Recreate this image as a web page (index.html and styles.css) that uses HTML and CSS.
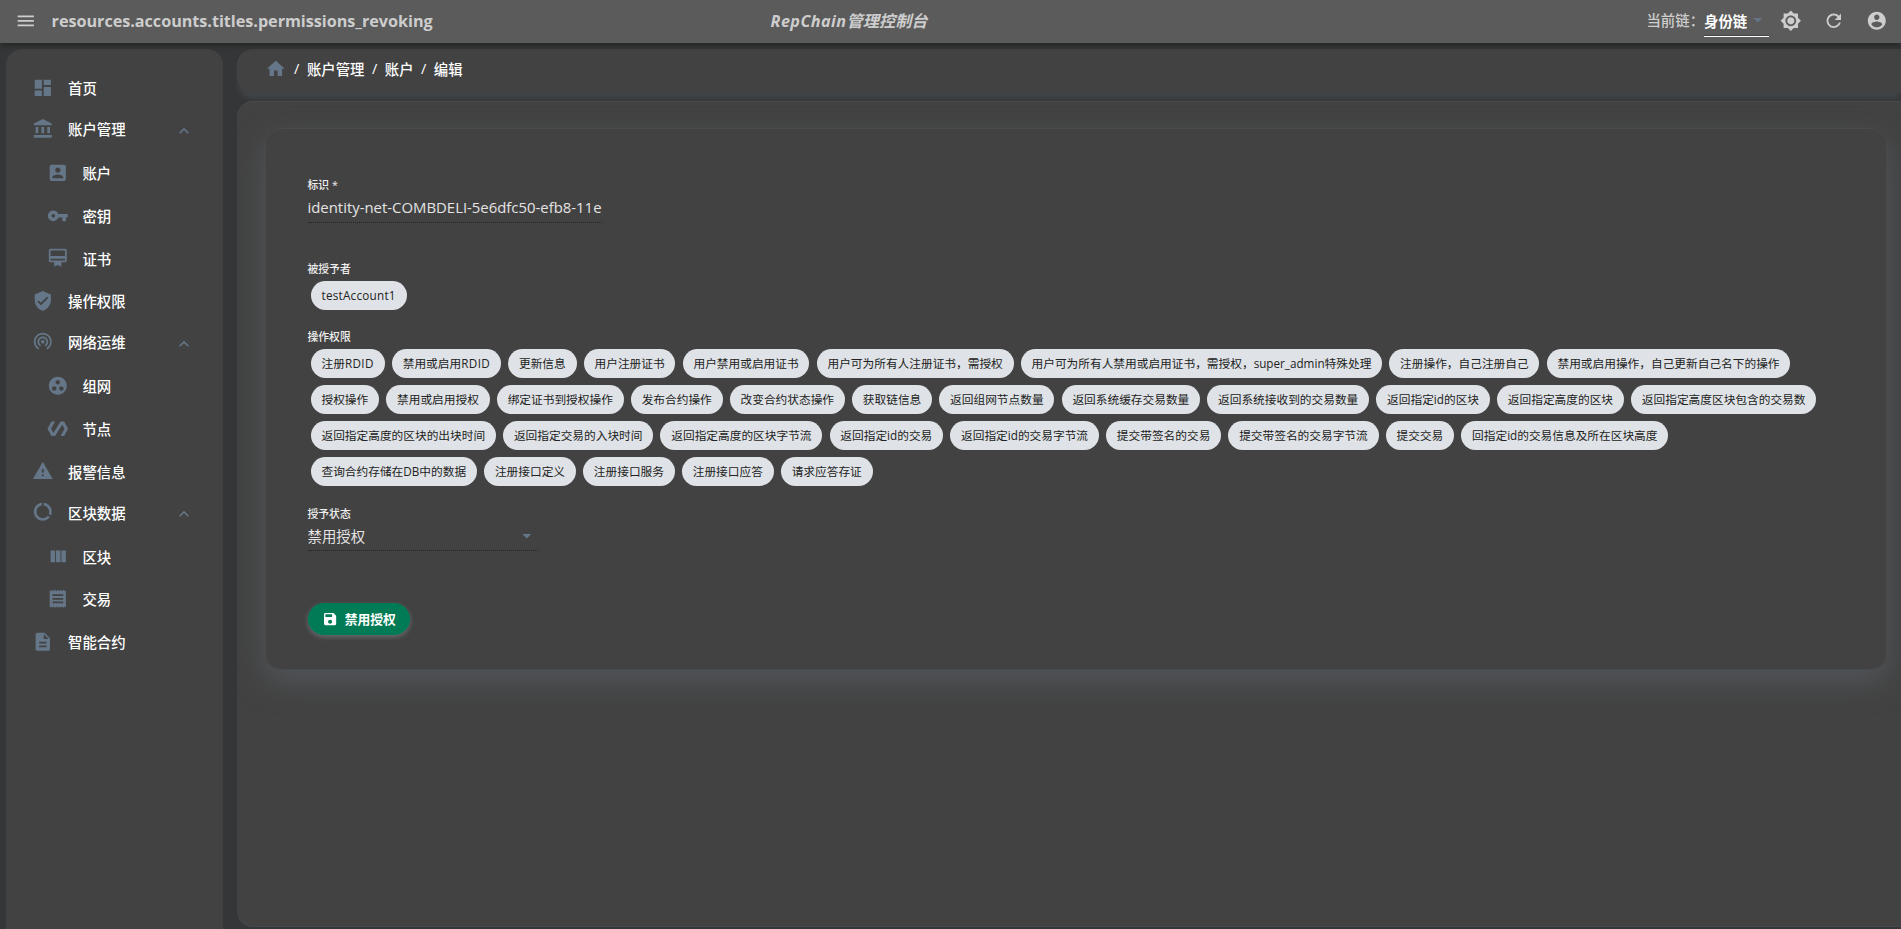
FILE: index.html
```html
<!DOCTYPE html>
<html lang="zh-CN">
<head>
<meta charset="utf-8">
<title>RepChain管理控制台</title>
<link rel="stylesheet" href="styles.css">
</head>
<body>
<header class="appbar">
  <svg class="icon menu-btn" viewBox="0 0 24 24"><path d="M3 18h18v-2H3v2zm0-5h18v-2H3v2zm0-7v2h18V6H3z"/></svg>
  <h1 class="page-title">resources.accounts.titles.permissions_revoking</h1>
  <div class="brand"><span class="brand-latin">RepChain</span>管理控制台</div>
  <div class="tools">
    <span class="chain-label">当前链：</span>
    <div class="chain-select"><span>身份链</span><svg class="icon" viewBox="0 0 24 24"><path d="M7 10l5 5 5-5z"/></svg></div>
    <svg class="icon tool" viewBox="0 0 24 24"><path d="M20 8.69V4h-4.69L12 .69 8.69 4H4v4.69L.69 12 4 15.31V20h4.69L12 23.31 15.31 20H20v-4.69L23.31 12 20 8.69zM12 18c-3.31 0-6-2.69-6-6s2.69-6 6-6 6 2.69 6 6-2.69 6-6 6zm0-10c-2.21 0-4 1.79-4 4s1.79 4 4 4 4-1.79 4-4-1.79-4-4-4z"/></svg>
    <svg class="icon tool" viewBox="0 0 24 24"><path d="M17.65 6.35C16.2 4.9 14.21 4 12 4c-4.42 0-7.99 3.58-7.99 8s3.57 8 7.99 8c3.73 0 6.84-2.55 7.73-6h-2.08c-.82 2.33-3.04 4-5.65 4-3.31 0-6-2.69-6-6s2.69-6 6-6c1.66 0 3.14.69 4.22 1.78L13 11h7V4l-2.35 2.35z"/></svg>
    <svg class="icon tool" viewBox="0 0 24 24"><path d="M12 2C6.48 2 2 6.48 2 12s4.48 10 10 10 10-4.48 10-10S17.52 2 12 2zm0 3c1.66 0 3 1.34 3 3s-1.34 3-3 3-3-1.34-3-3 1.34-3 3-3zm0 14.2c-2.5 0-4.71-1.28-6-3.22.03-1.99 4-3.08 6-3.08 1.99 0 5.97 1.09 6 3.08-1.29 1.94-3.5 3.22-6 3.22z"/></svg>
  </div>
</header>
<div class="body">
  <nav class="sidebar">
    <a class="item"><svg class="icon" viewBox="0 0 24 24"><path d="M3 13h8V3H3v10zm0 8h8v-6H3v6zm10 0h8V11h-8v10zm0-18v6h8V3h-8z"/></svg>首页</a>
    <a class="item head"><svg class="icon" viewBox="0 0 24 24"><path d="M4 10h3v7H4zM10.5 10h3v7h-3zM2 19h20v3H2zM17 10h3v7h-3zM12 1L2 6v2h20V6z"/></svg>账户管理<svg class="chev" viewBox="0 0 24 24"><path d="M12 8l-6 6 1.41 1.41L12 10.83l4.59 4.58L18 14z"/></svg></a>
    <a class="item sub"><svg class="icon" viewBox="0 0 24 24"><path d="M3 5v14c0 1.1.89 2 2 2h14c1.1 0 2-.9 2-2V5c0-1.1-.9-2-2-2H5c-1.11 0-2 .9-2 2zm12 4c0 1.66-1.34 3-3 3s-3-1.34-3-3 1.34-3 3-3 3 1.34 3 3zm-9 8c0-2 4-3.1 6-3.1s6 1.1 6 3.1v1H6v-1z"/></svg>账户</a>
    <a class="item sub"><svg class="icon" viewBox="0 0 24 24"><path d="M12.65 10C11.83 7.67 9.61 6 7 6c-3.31 0-6 2.69-6 6s2.69 6 6 6c2.61 0 4.83-1.67 5.65-4H17v4h4v-4h2v-4H12.65zM7 14c-1.1 0-2-.9-2-2s.9-2 2-2 2 .9 2 2-.9 2-2 2z"/></svg>密钥</a>
    <a class="item sub"><svg class="icon" viewBox="0 0 24 24"><path d="M20 2H4c-1.11 0-2 .89-2 2v11c0 1.11.89 2 2 2h4v5l4-2 4 2v-5h4c1.11 0 2-.89 2-2V4c0-1.11-.89-2-2-2zm0 13H4v-2h16v2zm0-5H4V4h16v6z"/></svg>证书</a>
    <a class="item"><svg class="icon" viewBox="0 0 24 24"><path d="M12 1L3 5v6c0 5.55 3.84 10.74 9 12 5.16-1.26 9-6.45 9-12V5l-9-4zm-2 16l-4-4 1.41-1.41L10 14.17l6.59-6.59L18 9l-8 8z"/></svg>操作权限</a>
    <a class="item head"><svg class="icon" viewBox="0 0 24 24"><path d="M12 10c-1.1 0-2 .9-2 2s.9 2 2 2 2-.9 2-2-.9-2-2-2zm6 2c0-3.31-2.69-6-6-6s-6 2.69-6 6c0 2.22 1.21 4.15 3 5.19l1-1.74c-1.19-.7-2-1.97-2-3.45 0-2.21 1.79-4 4-4s4 1.79 4 4c0 1.48-.81 2.75-2 3.45l1 1.74c1.79-1.04 3-2.97 3-5.19zM12 2C6.48 2 2 6.48 2 12c0 3.7 2.01 6.92 4.99 8.65l1-1.73C5.61 17.53 4 14.96 4 12c0-4.42 3.58-8 8-8s8 3.58 8 8c0 2.96-1.61 5.53-4 6.92l1 1.73c2.99-1.73 5-4.95 5-8.65 0-5.52-4.48-10-10-10z"/></svg>网络运维<svg class="chev" viewBox="0 0 24 24"><path d="M12 8l-6 6 1.41 1.41L12 10.83l4.59 4.58L18 14z"/></svg></a>
    <a class="item sub"><svg class="icon" viewBox="0 0 24 24"><path d="M12 2C6.48 2 2 6.48 2 12s4.48 10 10 10 10-4.48 10-10S17.52 2 12 2zM8 17.5c-1.38 0-2.5-1.12-2.5-2.5s1.12-2.5 2.5-2.5 2.5 1.12 2.5 2.5-1.12 2.5-2.5 2.5zM9.5 8c0-1.38 1.12-2.5 2.5-2.5s2.5 1.12 2.5 2.5-1.12 2.5-2.5 2.5S9.5 9.38 9.5 8zm6.5 9.5c-1.38 0-2.5-1.12-2.5-2.5s1.12-2.5 2.5-2.5 2.5 1.12 2.5 2.5-1.12 2.5-2.5 2.5z"/></svg>组网</a>
    <a class="item sub"><svg class="icon" viewBox="0 0 24 24"><path d="M19 4h-4L7.110 16.630 4.500 12 9 4H5L.5 12 5 20h4l7.890-12.630L19.500 12 15 20h4l4.500-8z"/></svg>节点</a>
    <a class="item"><svg class="icon" viewBox="0 0 24 24"><path d="M1 21h22L12 2 1 21zm12-3h-2v-2h2v2zm0-4h-2v-4h2v4z"/></svg>报警信息</a>
    <a class="item head"><svg class="icon" viewBox="0 0 24 24"><path d="M13 2.050v3.030c3.390.49 6 3.390 6 6.920 0 .9-.18 1.750-.48 2.540l2.600 1.530c.56-1.240.88-2.620.88-4.070 0-5.180-3.950-9.450-9-9.950zM12 19c-3.870 0-7-3.130-7-7 0-3.530 2.610-6.430 6-6.920V2.050c-5.060.5-9 4.760-9 9.950 0 5.520 4.470 10 9.990 10 3.310 0 6.240-1.610 8.060-4.090l-2.600-1.530C16.170 17.980 14.210 19 12 19z"/></svg>区块数据<svg class="chev" viewBox="0 0 24 24"><path d="M12 8l-6 6 1.410 1.410L12 10.830l4.590 4.580L18 14z"/></svg></a>
    <a class="item sub"><svg class="icon" viewBox="0 0 24 24"><path d="M10 18h5V5h-5v13zm-6 0h5V5H4v13zM16 5v13h5V5h-5z"/></svg>区块</a>
    <a class="item sub"><svg class="icon" viewBox="0 0 24 24"><path d="M18 17H6v-2h12v2zm0-4H6v-2h12v2zm0-4H6V7h12v2zM3 22l1.500-1.500L6 22l1.500-1.500L9 22l1.500-1.500L12 22l1.500-1.500L15 22l1.500-1.500L18 22l1.500-1.500L21 22V2l-1.500 1.500L18 2l-1.500 1.500L15 2l-1.500 1.500L12 2l-1.500 1.500L9 2 7.500 3.500 6 2 4.500 3.500 3 2v20z"/></svg>交易</a>
    <a class="item"><svg class="icon" viewBox="0 0 24 24"><path d="M14 2H6c-1.100 0-1.990.9-1.990 2L4 20c0 1.100.89 2 1.990 2H18c1.100 0 2-.9 2-2V8l-6-6zm2 16H8v-2h8v2zm0-4H8v-2h8v2zm-3-5V3.500L18.500 9H13z"/></svg>智能合约</a>
  </nav>
  <main class="main">
    <div class="crumbs"><svg class="icon" viewBox="0 0 24 24"><path d="M10 20v-6h4v6h5v-8h3L12 3 2 12h3v8z"/></svg><i>/</i><span>账户管理</span><i>/</i><span>账户</span><i>/</i><span>编辑</span></div>
    <section class="content">
      <div class="card">
        <label class="field-label id-label">标识 *</label>
        <div class="input id-input">identity-net-COMBDELI-5e6dfc50-efb8-11e</div>
        <div class="field-label grantee-label">被授予者</div>
        <div class="chips"><span class="chip"><b class="account">testAccount1</b></span></div>
        <div class="field-label ops-label">操作权限</div>
        <div class="chips">
          <span class="chip">注册<b class="caps">RDID</b></span><span class="chip">禁用或启用<b class="caps">RDID</b></span><span class="chip">更新信息</span><span class="chip">用户注册证书</span><span class="chip">用户禁用或启用证书</span><span class="chip">用户可为所有人注册证书，需授权</span><span class="chip">用户可为所有人禁用或启用证书，需授权，<b>super_admin</b>特殊处理</span><span class="chip">注册操作，自己注册自己</span><span class="chip">禁用或启用操作，自己更新自己名下的操作</span>
          <span class="chip">授权操作</span><span class="chip">禁用或启用授权</span><span class="chip">绑定证书到授权操作</span><span class="chip">发布合约操作</span><span class="chip">改变合约状态操作</span><span class="chip">获取链信息</span><span class="chip">返回组网节点数量</span><span class="chip">返回系统缓存交易数量</span><span class="chip">返回系统接收到的交易数量</span><span class="chip">返回指定<b>id</b>的区块</span><span class="chip">返回指定高度的区块</span><span class="chip">返回指定高度区块包含的交易数</span>
          <span class="chip">返回指定高度的区块的出块时间</span><span class="chip">返回指定交易的入块时间</span><span class="chip">返回指定高度的区块字节流</span><span class="chip">返回指定<b>id</b>的交易</span><span class="chip">返回指定<b>id</b>的交易字节流</span><span class="chip">提交带签名的交易</span><span class="chip">提交带签名的交易字节流</span><span class="chip">提交交易</span><span class="chip">回指定<b>id</b>的交易信息及所在区块高度</span>
          <span class="chip">查询合约存储在<b>DB</b>中的数据</span><span class="chip">注册接口定义</span><span class="chip">注册接口服务</span><span class="chip">注册接口应答</span><span class="chip">请求应答存证</span>
        </div>
        <label class="field-label state-label">授予状态</label>
        <div class="input state-input"><span>禁用授权</span><svg class="icon" viewBox="0 0 24 24"><path d="M7 10l5 5 5-5z"/></svg></div>
        <button class="save"><svg viewBox="0 0 24 24"><path d="M17 3H5c-1.110 0-2 .9-2 2v14c0 1.100.89 2 2 2h14c1.100 0 2-.9 2-2V7l-4-4zm-5 16c-1.660 0-3-1.340-3-3s1.340-3 3-3 3 1.340 3 3-1.340 3-3 3zm3-10H5V5h10v4z"/></svg><span>禁用授权</span></button>
      </div>
    </section>
  </main>
</div>
</body>
</html>
```
FILE: styles.css
```css
* { box-sizing: border-box; }

body {
  margin: 0;
  height: 929px;
  overflow: hidden;
  display: flex;
  flex-direction: column;
  background: #353637;
  color: #fff;
  font-family: "Open Sans", "Noto Sans CJK SC", sans-serif;
  font-size: 14.4px;
}

.icon { width: 21.6px; height: 21.6px; fill: #647687; flex: none; display: block; }

/* top bar */
.appbar {
  flex: none;
  height: 43px;
  display: flex;
  align-items: center;
  background: #5b5b5b;
  color: #cdcdcd;
  position: relative;
  padding: 0 13px 2px 15px;
  box-shadow: 0 2px 4px -1px rgba(0,0,0,.2), 0 4px 5px rgba(0,0,0,.14);
}
.appbar .icon { fill: #cdcdcd; }
.page-title { margin: 0 0 0 15px; font-size: 16.2px; font-weight: 700; letter-spacing: -.03px; width: 719px; white-space: nowrap; }
.brand { font-size: 16.2px; font-weight: 700; font-style: italic; white-space: nowrap; margin-top: -1px; }
.brand-latin { letter-spacing: .45px; }
.tools { margin-left: auto; display: flex; align-items: center; }
.chain-label { font-size: 14.4px; font-weight: 500; margin-top: -3px; }
.chain-select {
  display: flex;
  align-items: center;
  width: 65px;
  height: 31px;
  padding-bottom: 2px;
  margin-top: 2px;
  border-bottom: 1px solid #fff;
  box-shadow: inset 0 -1px #444;
  font-weight: 700;
  color: #fff;
}
.appbar .chain-select .icon { fill: #647687; }
.tool { margin-left: 21.6px; }
.chain-select + .tool { margin-left: 11px; }

/* shell */
.body { flex: 1; display: flex; gap: 14px; padding: 6px 0 0 6px; min-height: 0; }
.sidebar {
  width: 217px;
  flex: none;
  padding: 17.5px 0 0 26px;
  border-radius: 16px 16px 0 0;
  background: #424242;
}
.item {
  height: 42.6px;
  display: flex;
  align-items: center;
  font-weight: 500;
  padding-right: 29px;
}
.item .icon { margin-right: 14.4px; }
.sub { padding-left: 14.8px; }
.sub .icon { margin-right: 14px; }
.head { padding-bottom: 3px; }
.chev { width: 20px; height: 20px; fill: #647687; margin-left: auto; margin-top: 4px; }

.main { flex: 1; min-width: 0; display: flex; flex-direction: column; gap: 8px; padding-bottom: 2px; }
.crumbs {
  height: 44px;
  flex: none;
  display: flex;
  align-items: center;
  padding: 0 0 6px 28px;
  border-radius: 16px 0 0 16px;
  background: #424242;
  box-shadow: 0 7px 6px -2px #42474b;
  font-weight: 500;
}
.crumbs .icon { margin-top: 2px; }
.crumbs i { font-style: normal; width: 5.5px; margin: 0 7.4px; text-align: center; }
.content {
  flex: 1;
  padding: 27px 14px 0 28px;
  border-radius: 16px 0 0 16px;
  background: #424242;
  box-shadow: inset 0 1px #484848, inset 0 -1px #464b50;
  overflow: hidden;
}
.card {
  height: 542px;
  padding: 46px 42px 0 41.5px;
  border: 1px solid #484a4b;
  border-radius: 16px;
  background: #424242;
  box-shadow: 0 12px 30px -1px #53575b;
}
.field-label { display: block; font-size: 10.8px; line-height: 20px; color: #eee; font-weight: 500; }
.input { border-bottom: 1px dotted #222; color: #e4e4e4; white-space: nowrap; overflow: hidden; }
.id-input { width: 294px; height: 28px; line-height: 25px; font-size: 14.9px; }
.grantee-label { margin-top: 36px; }
.ops-label { margin-top: 17.5px; }
.chips { display: flex; flex-wrap: wrap; gap: 7.2px; padding: 2px 15px 0 3.2px; }
.ops-label + .chips { padding-top: 1.5px; }
.chip {
  height: 28.8px;
  padding: 0 10.8px;
  border-radius: 14.4px;
  background: #dfe2e6;
  color: #222;
  font-size: 11.7px;
  line-height: 28.8px;
  white-space: nowrap;
}
.chip b { font-weight: 400; }
.chip .account { letter-spacing: .25px; }
.chip .caps { letter-spacing: .4px; }
.state-label { margin-top: 18px; }
.state-input { width: 230px; height: 27px; padding-bottom: 2px; display: flex; align-items: center; justify-content: space-between; }
.save {
  margin-top: 52.5px;
  width: 102px;
  height: 32px;
  border: 0;
  border-radius: 16px;
  background: #007b55;
  color: #fff;
  display: flex;
  align-items: center;
  padding: 0 0 0 14px;
  font: 700 12.8px "Open Sans", "Noto Sans CJK SC", sans-serif;
  box-shadow: 0 2px 5px #6a6c70;
}
.save svg { width: 16.2px; height: 16.2px; fill: #fff; margin-right: 7px; }
.save span { padding-bottom: 2px; }
```
